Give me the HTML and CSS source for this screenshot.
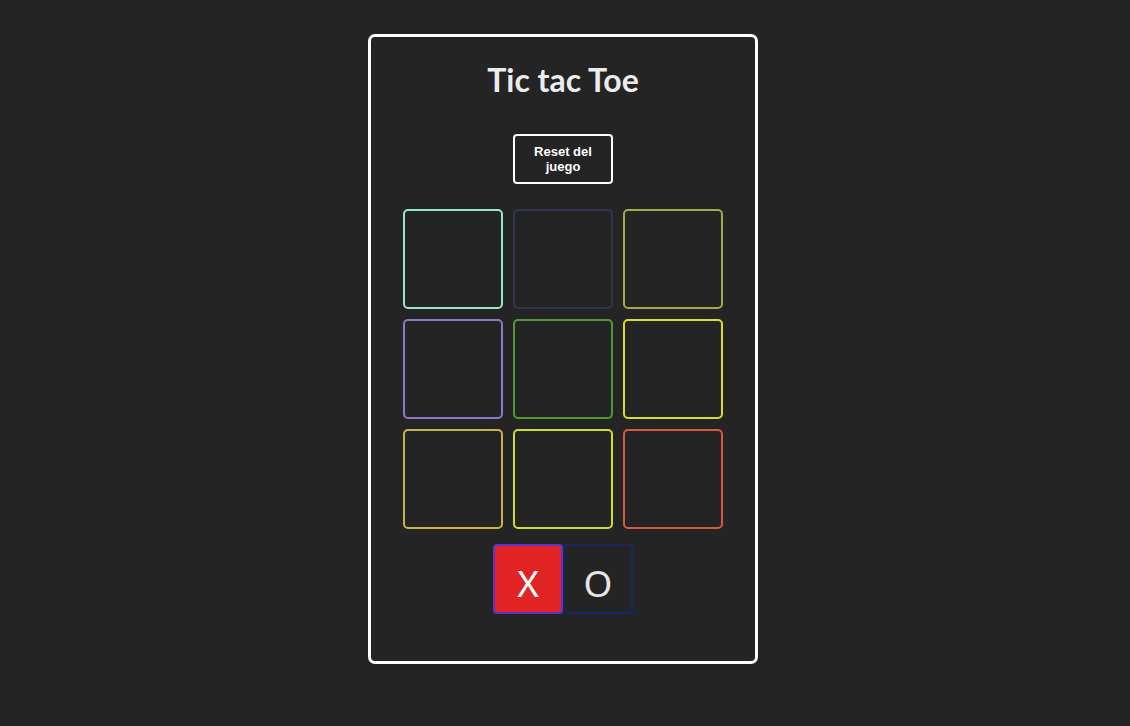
FILE: index.html
```html
<!DOCTYPE html>
<html lang="es">
<head>
<meta charset="utf-8">
<title>Tic tac Toe</title>
<link rel="stylesheet" href="styles.css">
</head>
<body>
<div class="page">
  <main class="card">
    <h1 class="title">Tic tac Toe</h1>
    <button class="reset">Reset del juego</button>
    <div class="board">
      <div class="cell c1"></div>
      <div class="cell c2"></div>
      <div class="cell c3"></div>
      <div class="cell c4"></div>
      <div class="cell c5"></div>
      <div class="cell c6"></div>
      <div class="cell c7"></div>
      <div class="cell c8"></div>
      <div class="cell c9"></div>
    </div>
    <div class="turns">
      <div class="turn turn-x">X</div>
      <div class="turn turn-o">O</div>
    </div>
  </main>
</div>
</body>
</html>
```

FILE: styles.css
```css
* { box-sizing: border-box; }

html, body {
  margin: 0;
  background: #242424;
}

.page {
  display: flex;
  justify-content: center;
  padding: 34px 4px 0 0;
}

.card {
  width: 390px;
  height: 630px;
  border: 3px solid #ffffff;
  border-radius: 7px;
  background: #242424;
  display: flex;
  flex-direction: column;
  align-items: center;
}

.title {
  margin: 19px 0 30px;
  font-family: Lato, "Open Sans", sans-serif;
  font-weight: 700;
  font-size: 32px;
  line-height: 48px;
  color: #ececec;
}

.reset {
  width: 100px;
  height: 50px;
  padding: 0 14px;
  border: 2px solid #ffffff;
  border-radius: 4px;
  background: transparent;
  color: #ffffff;
  font-family: "Liberation Sans", Arial, sans-serif;
  font-weight: 700;
  font-size: 13px;
  line-height: 15px;
  margin-bottom: 25px;
}

.board {
  display: grid;
  grid-template-columns: repeat(3, 100px);
  grid-auto-rows: 100px;
  gap: 10px;
  margin-bottom: 15px;
}

.cell {
  border: 2px solid;
  border-radius: 5px;
}

.c1 { border-color: #9ae6c8; }
.c2 { border-color: #30354f; }
.c3 { border-color: #a4aa4c; }
.c4 { border-color: #8a78c8; }
.c5 { border-color: #509a36; }
.c6 { border-color: #d8de26; }
.c7 { border-color: #c6b44a; }
.c8 { border-color: #cdde2a; }
.c9 { border-color: #d65a42; }

.turns {
  display: flex;
}

.turn {
  width: 70px;
  height: 70px;
  border: 2px solid;
  border-radius: 4px;
  display: flex;
  align-items: center;
  justify-content: center;
  font-family: "Noto Sans", "Open Sans", sans-serif;
  font-size: 37px;
  padding-top: 6px;
}

.turn-x {
  background: #e02424;
  border-color: #5a32cc;
  color: #ffffff;
}

.turn-o {
  border-color: #1c2468;
  color: #e6e6e6;
}
```
